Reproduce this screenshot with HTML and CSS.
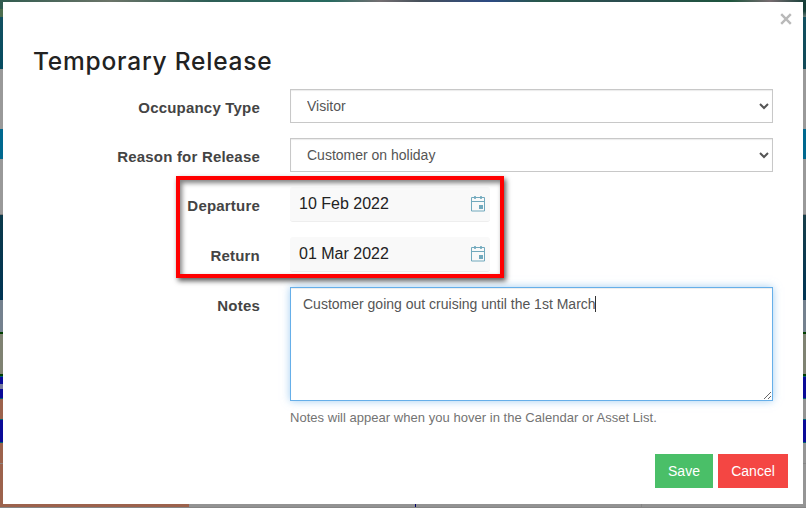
FILE: index.html
```html
<!DOCTYPE html>
<html lang="en">
<head>
<meta charset="utf-8">
<title>Temporary Release</title>
<link rel="stylesheet" href="styles.css">
</head>
<body>
<main class="modal">
  <button class="close" aria-label="Close"><svg width="12" height="12" viewBox="0 0 12 12"><path d="M1.2 1.2 10.8 10.8M10.8 1.2 1.2 10.8"/></svg></button>
  <h1 class="title">Temporary Release</h1>
  <form class="form">
    <div class="row">
      <label class="label" for="type">Occupancy Type</label>
      <select class="select" id="type"><option>Visitor</option></select>
    </div>
    <div class="row">
      <label class="label" for="reason">Reason for Release</label>
      <select class="select" id="reason"><option>Customer on holiday</option></select>
    </div>
    <div class="row row-date">
      <span class="label">Departure</span>
      <div class="date"><span>10 Feb 2022</span>
        <svg class="cal" width="14" height="16" viewBox="0 0 14 16"><path d="M.5 1.5h13v13.5H.5zM.5 5.5h13"/><path class="pin" d="M4 0V3M10 0V3"/><path class="day" d="M8 9h4v4H8z"/></svg>
      </div>
    </div>
    <div class="row row-date">
      <span class="label">Return</span>
      <div class="date"><span>01 Mar 2022</span>
        <svg class="cal" width="14" height="16" viewBox="0 0 14 16"><path d="M.5 1.5h13v13.5H.5zM.5 5.5h13"/><path class="pin" d="M4 0V3M10 0V3"/><path class="day" d="M8 9h4v4H8z"/></svg>
      </div>
    </div>
    <div class="row row-notes">
      <label class="label" for="notes">Notes</label>
      <div class="notes-wrap">
        <textarea class="notes" id="notes">Customer going out cruising until the 1st March</textarea>
        <i class="caret"></i>
        <p class="hint">Notes will appear when you hover in the Calendar or Asset List.</p>
      </div>
    </div>
  </form>
  <footer class="actions">
    <button class="btn save">Save</button>
    <button class="btn cancel">Cancel</button>
  </footer>
  <div class="highlight"></div>
</main>
</body>
</html>
```
FILE: styles.css
```css
* { box-sizing: border-box; }
html, body { margin: 0; height: 508px; overflow: hidden; }
body {
  padding: 2px 3px 4px;
  font-family: "Liberation Sans", Arial, sans-serif;
  background:
    linear-gradient(90deg, #315c50, #6b7468 110px, #2d5e56 210px, #286a60 330px, #746f72 380px, #46505a 420px, #2c4a84 490px, #28584a 540px, #2b4c50 620px, #1d553d 730px, #776c70 770px, #153e38) 0 0 / 806px 2px no-repeat,
    linear-gradient(#868686, #868686) 0 507px / 806px 1px no-repeat,
    linear-gradient(#000066, #000066) 415px 504px / 1px 4px no-repeat,
    linear-gradient(#858585, #858585) 641px 504px / 1px 3px no-repeat,
    linear-gradient(#9c624c, #9c624c) 0 504px / 189px 3px no-repeat,
    linear-gradient(#315c50 9px, #4c6e4f 9px 17px, #125060 17px, #064b60 69px, #999 69px 129px, #00688f 129px 159px, #999 159px 214px, #777 214px 215px, #0b394a 215px, #003454 300px, #74818e 300px 332px, #003f00 332px 334px, #7f8272 334px 374px, #003f00 374px 376px, #006076 376px 377px, #0a0a98 377px 384px, #777b9c 384px 389px, #0a0a98 389px 398px, #006076 398px 399px, #9c624c 399px 419px, #006076 419px 420px, #0a0a98 420px 442px, #006076 442px 443px, #9c624c 443px 463px, #8d8580 463px 464px, #9c624c 464px) 0 0 / 3px 504px no-repeat,
    linear-gradient(#153e38 11px, #687b76 17px, #125060 17px, #124a58 69px, #999 69px 129px, #00688f 129px 159px, #999 159px 214px, #777 214px 215px, #183f4a 215px, #003454 300px, #74818e 300px 332px, #003f00 332px 334px, #7f8272 334px 374px, #003f00 374px 376px, #006076 376px 377px, #0a0a98 377px 398px, #006076 398px 399px, #939393 399px 419px, #006076 419px 420px, #0a0a98 420px 442px, #006076 442px 443px, #959595 443px 463px, #868686 463px 464px, #959595 464px) 803px 0 / 3px 504px no-repeat,
    #939393;
}
.modal { position: relative; height: 502px; background: #fff; padding: 42px 30px 0 31px; }
.close { position: absolute; right: 11px; top: 11px; width: 12px; height: 12px; padding: 0; border: 0; background: none; }
.close svg { display: block; fill: none; stroke: #b9b9b9; stroke-width: 2.4; }
.title { margin: 0 0 0 -1px; height: 45px; font: 500 24.5px/34px Inter, sans-serif; letter-spacing: .78px; color: #222; white-space: nowrap; }
.row { display: grid; grid-template-columns: 226px 483px; column-gap: 30px; height: 49px; align-items: start; }
.row-date { height: 50px; }
.row-notes { height: 150px; }
.label { text-align: right; font-weight: bold; font-size: 15px; line-height: 36px; padding-top: 1px; letter-spacing: .2px; color: #444; white-space: nowrap; }
.select { height: 34px; width: 483px; padding: 0 1px 0 12px; border: 1px solid #c8c8c8; border-radius: 0; background-color: #fff; box-shadow: inset 0 1px 1px rgba(0,0,0,.08); font: 14px "Liberation Sans", Arial, sans-serif; color: #555; }
.date { display: flex; align-items: center; justify-content: space-between; width: 200px; height: 35px; padding: 0 5px 0 9px; background: #f9f9f9; border-bottom: 1px solid #eee; border-radius: 3px; font-size: 16px; color: #222; }
.cal { fill: none; stroke: #71a9bd; stroke-width: 1; }
.cal .pin { stroke-width: 1.6; }
.cal .day { fill: #71a9bd; stroke: none; }
.notes-wrap { position: relative; }
.notes { display: block; width: 483px; height: 114px; margin: 0; padding: 6px 12px; border: 1px solid #66afe9; border-radius: 0; outline: 0; box-shadow: inset 0 1px 1px rgba(0,0,0,.075), 0 0 8px rgba(102,175,233,.6); font: 14px/20px "Liberation Sans", Arial, sans-serif; color: #555; }
.caret { position: absolute; left: 305px; top: 9px; width: 1px; height: 16px; background: #333; }
.hint { margin: 7px 0 0; font-size: 13px; line-height: 20px; letter-spacing: .03px; color: #737373; white-space: nowrap; }
.actions { display: flex; justify-content: flex-end; gap: 5px; margin: 17px -15px 0 0; }
.btn { height: 34px; border: 0; padding: 0; color: #fff; font: 14px "Liberation Sans", Arial, sans-serif; }
.save { width: 58px; background: #4abf68; }
.cancel { width: 70px; background: #f44643; }
.highlight { position: absolute; left: 173px; top: 174px; width: 328px; height: 102px; border: 4px solid #f00; box-shadow: 2px 3px 5px rgba(0,0,0,.65), inset 2px 3px 5px rgba(0,0,0,.5); pointer-events: none; }
```
